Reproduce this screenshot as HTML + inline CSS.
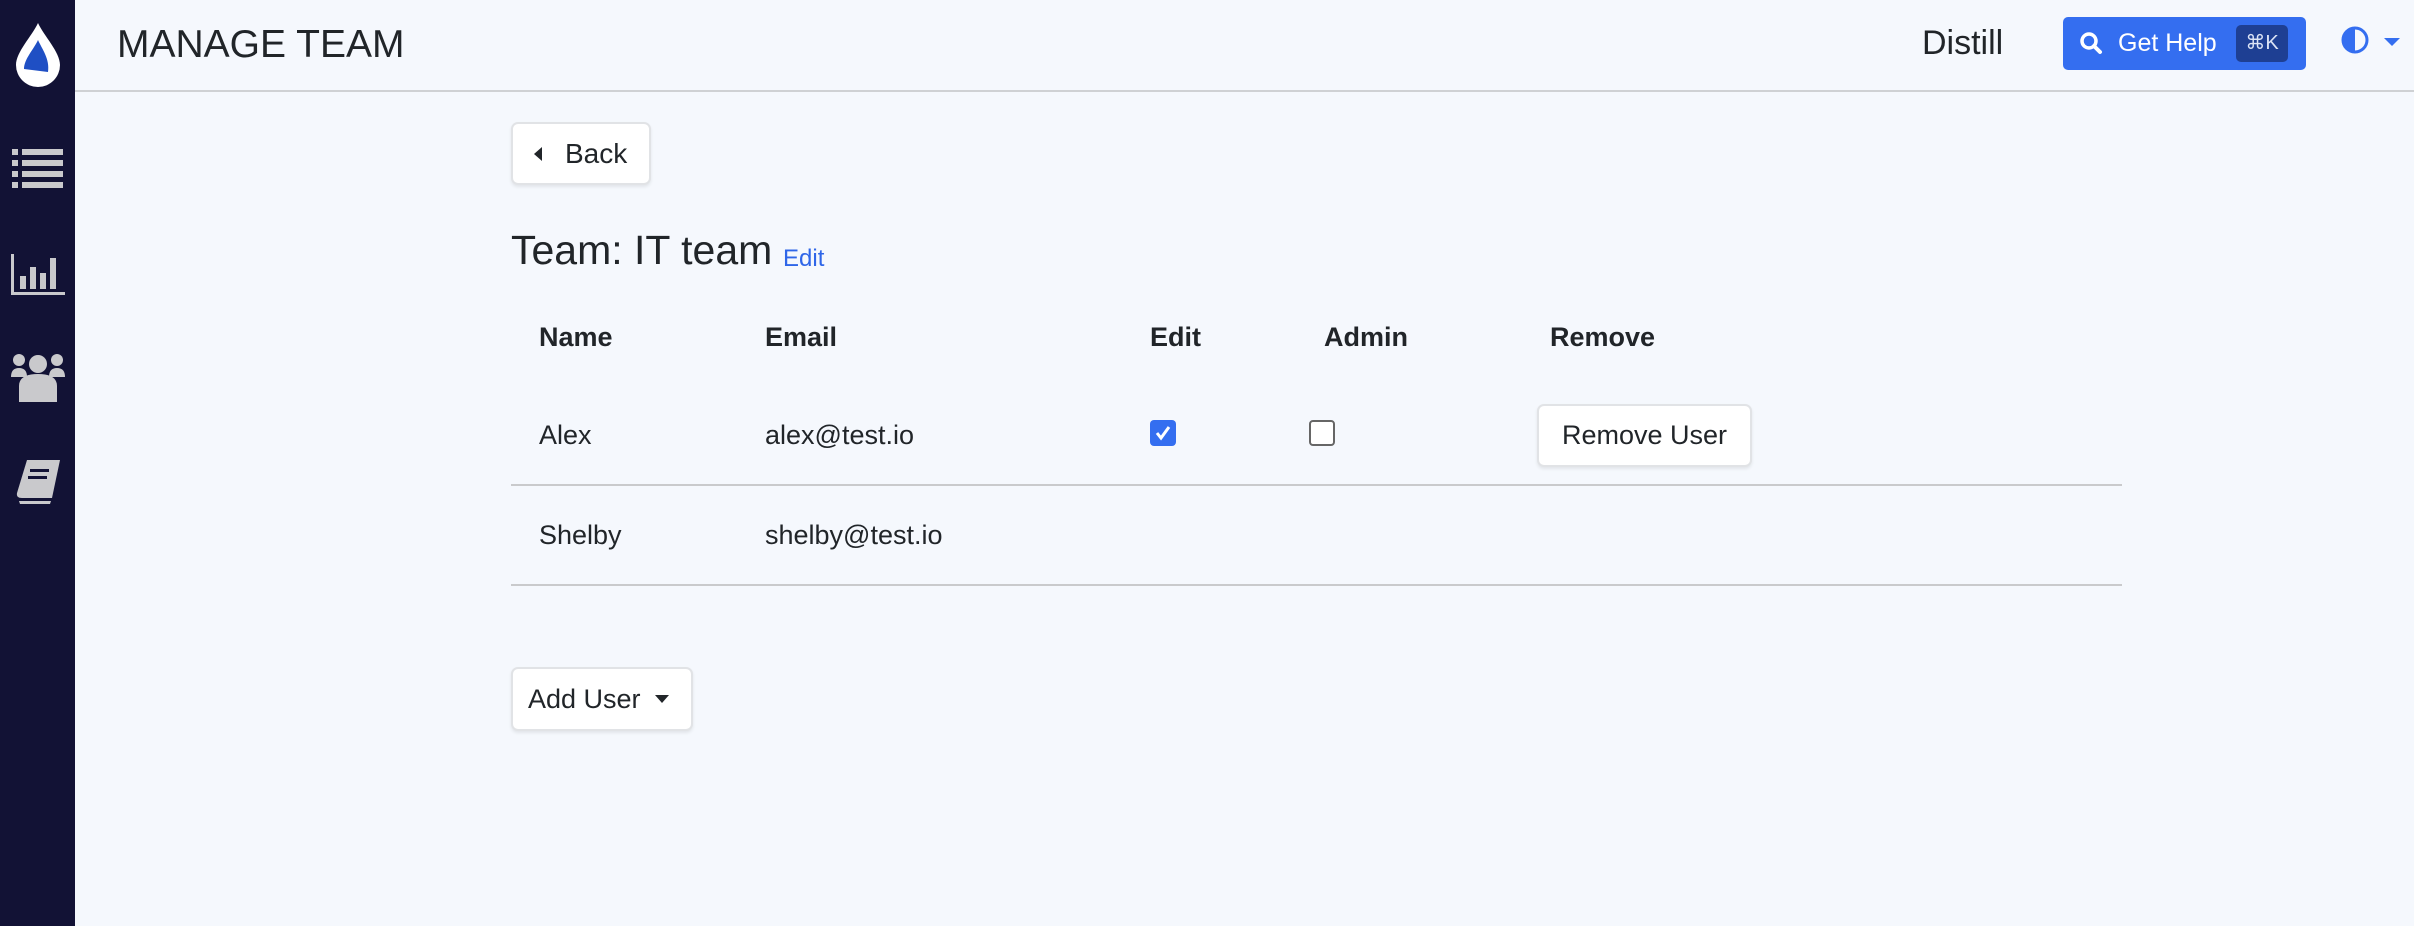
<!DOCTYPE html>
<html><head><meta charset="utf-8"><style>
*{box-sizing:border-box;margin:0;padding:0}
body{width:2414px;height:926px;background:#f5f8fd;font-family:"Liberation Sans",sans-serif;color:#212529;position:relative;overflow:hidden}
.sb{position:absolute;left:0;top:0;width:75px;height:926px;background:#121235}
.hdr{position:absolute;left:75px;top:0;right:0;height:92px;border-bottom:2px solid #cfd1d4}
.abs{position:absolute;white-space:nowrap}
.btn{position:absolute;background:#fff;border:2px solid #e1e3e6;border-radius:7px;box-shadow:0 2px 3px rgba(0,0,0,.08);font-size:27px;color:#212529;display:flex;align-items:center}
.line{position:absolute;left:511px;width:1611px;height:2px;background:#c9cacc}
.t{font-size:27px}
.b{font-weight:bold}
</style></head><body>
<div class="sb">
<svg class="abs" style="left:14px;top:22px" width="48" height="66" viewBox="0 0 48 66"><path d="M24 1 C18 14 2 30 2 43 A22 22 0 0 0 46 43 C46 30 30 14 24 1Z" fill="#fff"/><path d="M24 18 C20 27 10 37 10 47 L34 50 C36 37 28 27 24 18Z" fill="#1f4fc4"/></svg>
<svg class="abs" style="left:12px;top:148px" width="51" height="42" viewBox="0 0 51 42"><g fill="#c9c9cc"><rect x="0" y="1" width="6" height="6"/><rect x="10" y="1" width="41" height="6"/><rect x="0" y="12" width="6" height="6"/><rect x="10" y="12" width="41" height="6"/><rect x="0" y="23" width="6" height="6"/><rect x="10" y="23" width="41" height="6"/><rect x="0" y="34" width="6" height="6"/><rect x="10" y="34" width="41" height="6"/></g></svg>
<svg class="abs" style="left:11px;top:254px" width="54" height="41" viewBox="0 0 54 41"><g fill="#c9c9cc"><rect x="0" y="0" width="3" height="41"/><rect x="0" y="38" width="54" height="3"/><rect x="9" y="22" width="6" height="13"/><rect x="19" y="13" width="6" height="22"/><rect x="29" y="19" width="6" height="16"/><rect x="39" y="4" width="6" height="31"/></g></svg>
<svg class="abs" style="left:11px;top:353px" width="54" height="50" viewBox="0 0 54 50"><g fill="#c9c9cc"><circle cx="8" cy="7" r="6"/><circle cx="46" cy="7" r="6"/><circle cx="27" cy="11" r="9"/><path d="M0 24 Q0 15 8 15 Q16 15 16 24Z"/><path d="M38 24 Q38 15 46 15 Q54 15 54 24Z"/><path d="M8 49 L8 33 Q8 21 27 21 Q46 21 46 33 L46 49Z"/></g></svg>
<svg class="abs" style="left:15px;top:459px" width="47" height="46" viewBox="0 0 47 46"><path d="M12 1 H45 L37 39 H7 Q1 39 2 34 Z" fill="#c9c9cc"/><path d="M4 42 H36 L35 45 H5Z" fill="#c9c9cc"/><rect x="15" y="10" width="19" height="3" fill="#121235"/><rect x="13" y="17" width="19" height="3" fill="#121235"/></svg>
</div>
<div class="hdr"></div>
<div class="abs" style="left:117px;top:23px;font-size:39px;color:#212529">MANAGE TEAM</div>
<div class="abs" style="left:1922px;top:24px;font-size:34px">Distill</div>
<div class="abs" style="left:2063px;top:17px;width:243px;height:53px;background:#346ef0;border-radius:5px;color:#fff">
<svg class="abs" style="left:16px;top:14px" width="24" height="24" viewBox="0 0 24 24"><circle cx="10" cy="10" r="7" stroke="#fff" stroke-width="3.5" fill="none"/><path d="M15 15 L21 21" stroke="#fff" stroke-width="4" stroke-linecap="round"/></svg>
<div class="abs" style="left:55px;top:12px;font-size:25px">Get Help</div>
<div class="abs" style="left:173px;top:8px;width:52px;height:37px;background:#1e3f93;border-radius:5px;font-size:20px;text-align:center;line-height:37px;color:#dbe3f5">⌘K</div>
</div>
<svg class="abs" style="left:2340px;top:25px" width="30" height="30" viewBox="0 0 30 30"><circle cx="15" cy="15" r="12" fill="none" stroke="#346ef0" stroke-width="3"/><path d="M15 3 A12 12 0 0 0 15 27Z" fill="#346ef0"/></svg>
<svg class="abs" style="left:2384px;top:38px" width="16" height="10"><path d="M0 0 H16 L8 8Z" fill="#346ef0"/></svg>
<div class="btn" style="left:511px;top:122px;width:140px;height:63px"><svg style="margin-left:20px" width="10" height="14"><path d="M9 0 V14 L1 7Z" fill="#212529"/></svg><span style="margin-left:22px;font-size:28px">Back</span></div>
<div class="abs" style="left:511px;top:227px;font-size:41px">Team: IT team</div>
<div class="abs" style="left:783px;top:245px;font-size:24px;color:#2f66e8">Edit</div>
<div class="abs t b" style="left:539px;top:322px">Name</div>
<div class="abs t b" style="left:765px;top:322px">Email</div>
<div class="abs t b" style="left:1150px;top:322px">Edit</div>
<div class="abs t b" style="left:1324px;top:322px">Admin</div>
<div class="abs t b" style="left:1550px;top:322px">Remove</div>
<div class="abs t" style="left:539px;top:420px">Alex</div>
<div class="abs t" style="left:765px;top:420px">alex@test.io</div>
<div class="abs" style="left:1150px;top:420px;width:26px;height:26px;background:#346ef0;border-radius:4px"><svg width="26" height="26"><path d="M7 13 L11 18 L19 7" stroke="#fff" stroke-width="3" fill="none"/></svg></div>
<div class="abs" style="left:1309px;top:420px;width:26px;height:26px;border:2px solid #666;border-radius:4px;background:#fff"></div>
<div class="btn" style="left:1537px;top:404px;width:215px;height:63px;justify-content:center">Remove User</div>
<div class="line" style="top:484px"></div>
<div class="abs t" style="left:539px;top:520px">Shelby</div>
<div class="abs t" style="left:765px;top:520px">shelby@test.io</div>
<div class="line" style="top:584px"></div>
<div class="btn" style="left:511px;top:667px;width:182px;height:64px"><span style="margin-left:15px">Add User</span><svg style="margin-left:14px" width="14" height="8"><path d="M0 0 H14 L7 8Z" fill="#212529"/></svg></div>
</body></html>
